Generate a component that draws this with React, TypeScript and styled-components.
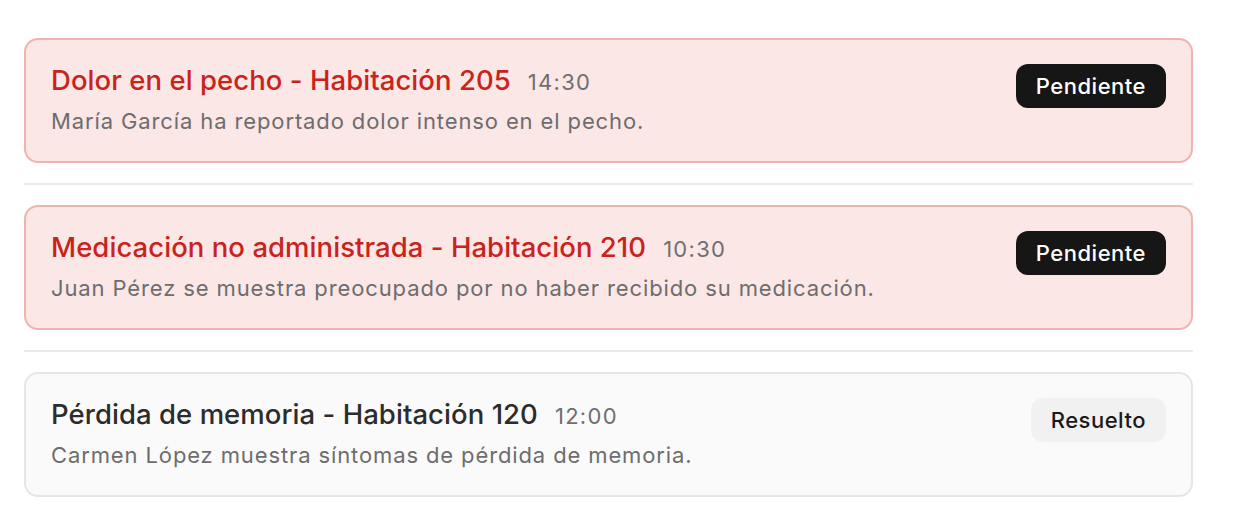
import React from "react";
import styled, { createGlobalStyle } from "styled-components";

const Global = createGlobalStyle`
  html, body { margin: 0; padding: 0; background: #ffffff; }
  body { font-family: Inter, "Noto Sans", sans-serif; -webkit-font-smoothing: antialiased; }
`;

const List = styled.div`
  width: 1169px;
  padding: 38px 0 0 24px;
  display: flex;
  flex-direction: column;
`;

const Card = styled.div<{ $urgent: boolean }>`
  box-sizing: border-box;
  height: 125px;
  border-radius: 14px;
  border: 2px solid ${(p) => (p.$urgent ? "#f1b3ad" : "#e6e6e6")};
  background: ${(p) => (p.$urgent ? "#fbe7e6" : "#fafafa")};
  padding: 0 25px 0 25px;
  display: flex;
  align-items: flex-start;
  justify-content: space-between;
`;

const Body = styled.div`
  display: flex;
  flex-direction: column;
  padding-top: 24px;
`;

const TitleRow = styled.div`
  display: flex;
  align-items: baseline;
  gap: 17px;
`;

const Title = styled.span<{ $urgent: boolean }>`
  font-size: 27.5px;
  font-weight: 500;
  letter-spacing: 0.05px;
  line-height: 32px;
  color: ${(p) => (p.$urgent ? "#c9231b" : "#2c2c2c")};
`;

const Time = styled.span`
  font-size: 22px;
  letter-spacing: 1.3px;
  color: #6f6f6f;
`;

const Desc = styled.div`
  font-size: 22px;
  letter-spacing: 0.88px;
  line-height: 28px;
  color: #6d6d6d;
  margin-top: 11px;
`;

const Badge = styled.span<{ $urgent: boolean }>`
  margin-top: 24px;
  height: 44px;
  box-sizing: border-box;
  padding: 0 20px;
  border-radius: 12px;
  display: inline-flex;
  align-items: center;
  font-size: 22px;
  letter-spacing: 0.5px;
  font-weight: 500;
  background: ${(p) => (p.$urgent ? "#161616" : "#f1f1f1")};
  color: ${(p) => (p.$urgent ? "#ffffff" : "#1a1a1a")};
`;

const Divider = styled.div`
  height: 2px;
  background: #ebebeb;
  margin: 20px 0;
`;

const items = [
  {
    title: "Dolor en el pecho - Habitación 205",
    time: "14:30",
    desc: "María García ha reportado dolor intenso en el pecho.",
    urgent: true,
    status: "Pendiente",
  },
  {
    title: "Medicación no administrada - Habitación 210",
    time: "10:30",
    desc: "Juan Pérez se muestra preocupado por no haber recibido su medicación.",
    urgent: true,
    status: "Pendiente",
  },
  {
    title: "Pérdida de memoria - Habitación 120",
    time: "12:00",
    desc: "Carmen López muestra síntomas de pérdida de memoria.",
    urgent: false,
    status: "Resuelto",
  },
];

export default function App() {
  return (
    <>
      <Global />
      <List>
        {items.map((it, i) => (
          <React.Fragment key={i}>
            {i > 0 && <Divider />}
            <Card $urgent={it.urgent}>
              <Body>
                <TitleRow>
                  <Title $urgent={it.urgent}>{it.title}</Title>
                  <Time>{it.time}</Time>
                </TitleRow>
                <Desc>{it.desc}</Desc>
              </Body>
              <Badge $urgent={it.urgent}>{it.status}</Badge>
            </Card>
          </React.Fragment>
        ))}
      </List>
    </>
  );
}
